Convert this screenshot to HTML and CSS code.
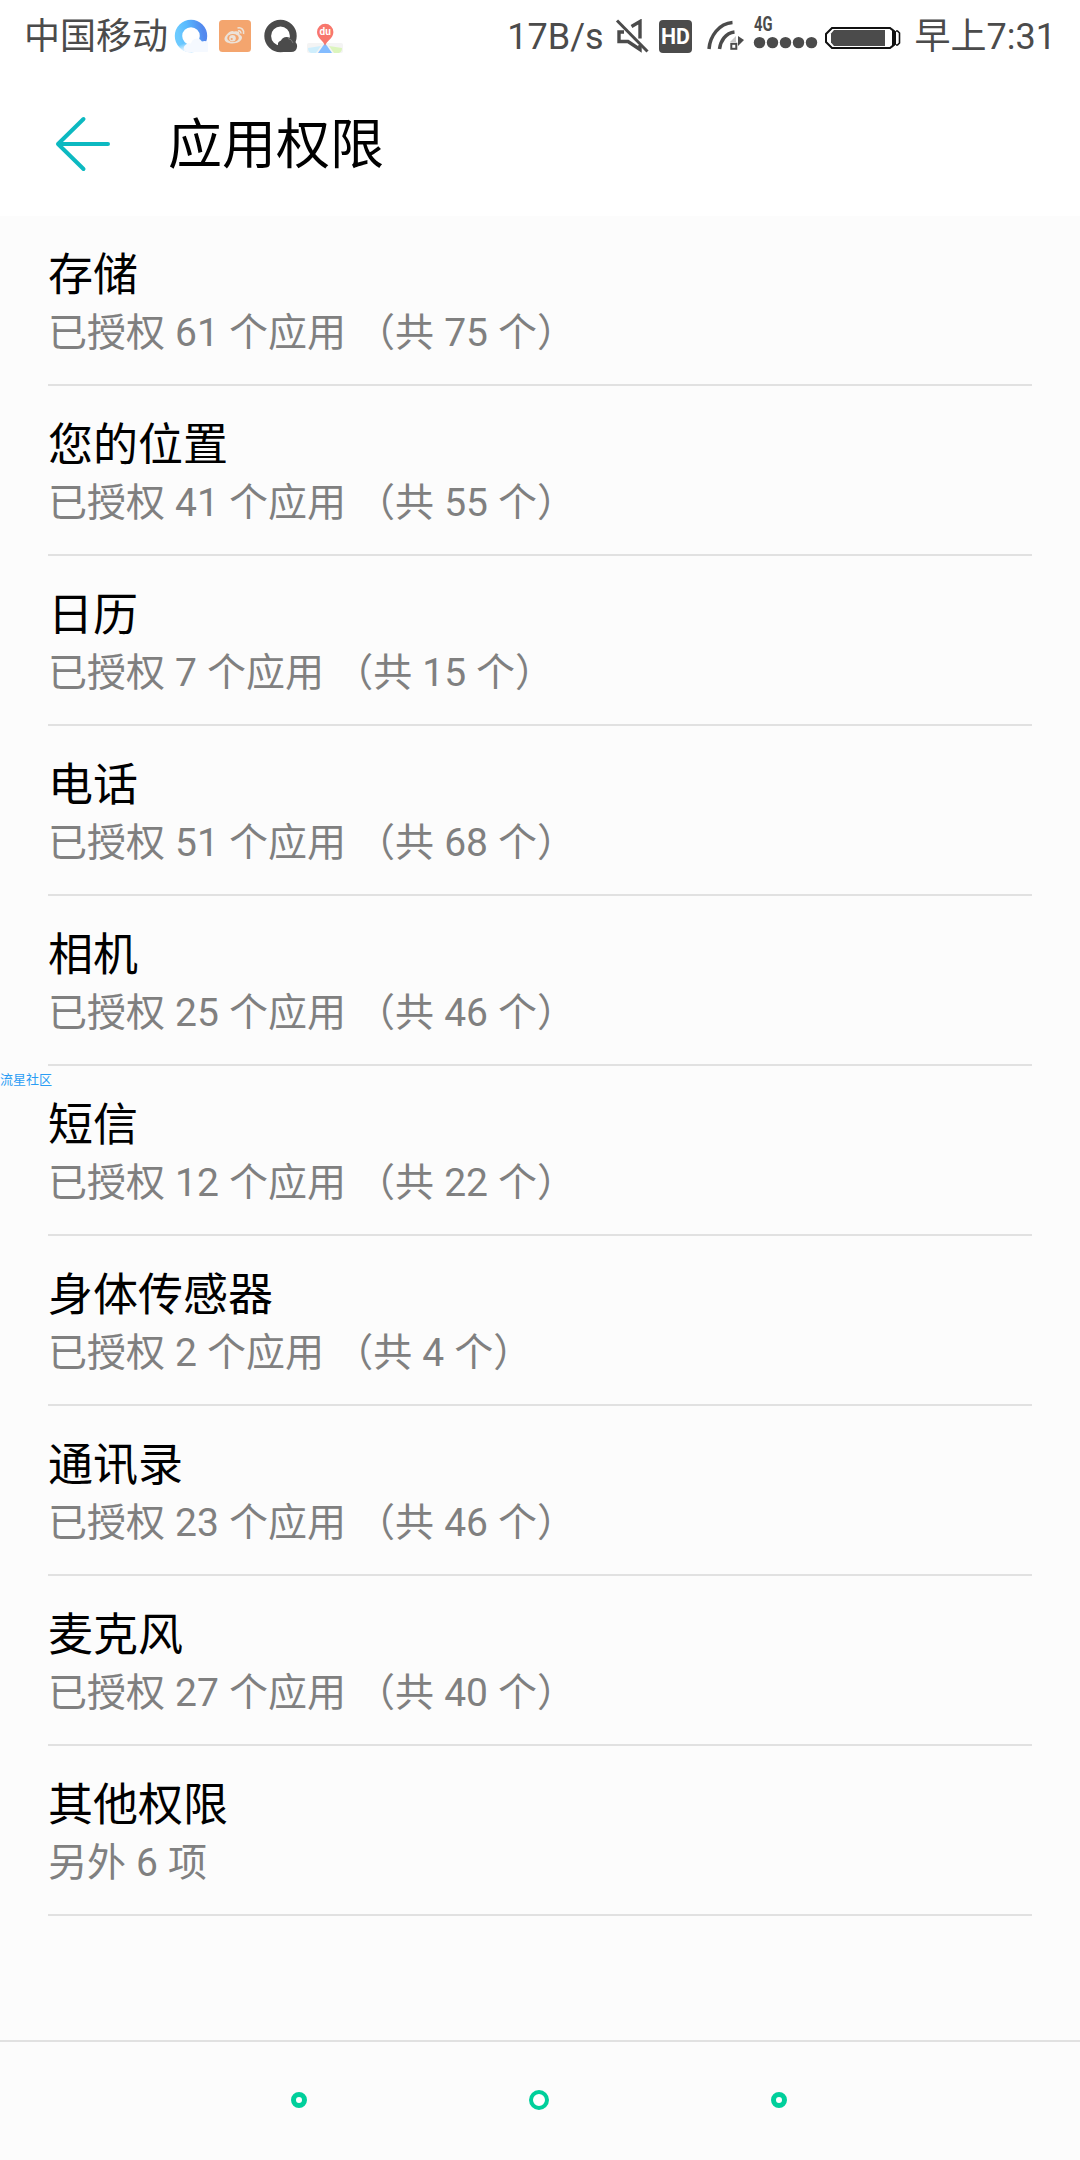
FILE: index.html
```html
<!DOCTYPE html>
<html lang="zh-CN">

<head>
  <meta charset="UTF-8" />
  <meta name="viewport" content="width=device-width, initial-scale=1.0" />
  <title>应用权限</title>
  <link rel="stylesheet" href="styles.css">
</head>

<body>
  <div class="status-bar">
    <div class="status-left">
      <span class="carrier">中国移动</span>
      <svg class="icon-browser" width="34" height="34" viewBox="0 0 34 34">
        <defs>
          <linearGradient id="ring" x1="0" y1="0.6" x2="1" y2="0.4">
            <stop offset="0" stop-color="#6ccaff" />
            <stop offset="0.4" stop-color="#58bbff" />
            <stop offset="1" stop-color="#5389ee" />
          </linearGradient>
          <linearGradient id="fade" x1="0.3" y1="0.4" x2="0.55" y2="1">
            <stop offset="0.2" stop-color="#fff" stop-opacity="0" />
            <stop offset="0.9" stop-color="#f4f9ff" />
          </linearGradient>
        </defs>
        <circle cx="17" cy="17" r="12.500" fill="none" stroke="url(#ring)" stroke-width="7.400" />
        <path d="M.5 17a16.500 16.500 0 0 0 16.500 16.500V26a9 9 0 0 1-9-9z" fill="url(#fade)" />
        <path d="M13 33a4 4 0 0 1-1-7.500a5 5 0 0 1 5-1a6 6 0 0 1 11-2a5 5 0 0 1 5 10.500z" fill="#f5f9ff" />
      </svg>
      <svg class="icon-weibo" width="32" height="32" viewBox="0 0 32 32">
        <rect width="32" height="32" rx="3.500" fill="#f4a56e" />
        <path d="M15 11.500c-3-2.500-9.500 4-9.500 7.500c0 3 4 4.500 8 4.500c5.500 0 9.500-3 9.500-6c0-2-2-2.500-2.500-3c.6-3-2-4-5.500-3z" fill="#ece2d8" />
        <ellipse cx="14" cy="18" rx="5.800" ry="4" fill="#f4a56e" />
        <circle cx="13.500" cy="18.300" r="3.300" fill="#ece2d8" />
        <circle cx="12.700" cy="19" r="1.100" fill="#f4a56e" />
        <path d="M18.500 8c4-1 7 2 6 6M19 11c2-.4 3.200.8 2.800 2.500" fill="none" stroke="#ece2d8" stroke-width="1.600" />
      </svg>
      <svg class="icon-quark" width="34" height="34" viewBox="0 0 34 34">
        <circle cx="16.500" cy="17" r="12.800" fill="none" stroke="#4b4b4b" stroke-width="6.800" />
        <path d="M14 33v-6.500a4.500 4.500 0 0 1 3-5a6 6 0 0 1 11 0a5.500 5.500 0 0 1 5 6.500q-.5 5-6 5z" fill="#4b4b4b" />
        <path d="M24 19.500a6 6 0 0 1 5 4.500" fill="none" stroke="#888" stroke-width=".7" />
      </svg>
      <svg class="icon-map" width="36" height="32" viewBox="0 0 36 32">
        <rect y="20" width="36" height="10" rx="2" fill="#f4f4f4" />
        <path d="M1 25l13-2-5 7H4q-3-1-3-5z" fill="#cfeefc" />
        <path d="M35 25l-13-2 5 7h5q3-1 3-5z" fill="#dcf5bd" />
        <path d="M18 20l7 10H11z" fill="#83bcff" />
        <path d="M18 23c-1-5-8-7.500-8-14a8.200 8.200 0 0 1 16.400 0c0 6.500-7 9-8.400 14z" fill="#f8776d" />
        <text x="18.200" y="11.700" class="map-text">du</text>
      </svg>
    </div>
    <div class="status-right">
      <span class="speed">17B/s</span>
      <svg class="icon-mute" width="34" height="34" viewBox="0 0 34 34" fill="none" stroke="#4b4b4b">
        <path d="M16.500 7.500L25 2.500v17M25 26v4.500L13 22.500H4V13h5" stroke-width="3.400" />
        <path d="M2 1.500l30.500 31" stroke-width="3" />
      </svg>
      <svg class="icon-hd" width="33" height="33" viewBox="0 0 33 33">
        <rect width="33" height="33" rx="4" fill="#4b4b4b" />
        <text x="16.500" y="24.200" class="hd-text" textLength="29" lengthAdjust="spacingAndGlyphs">HD</text>
      </svg>
      <svg class="icon-wifi" width="38" height="32" viewBox="0 0 38 32">
        <path d="M2 29C3 16 12 3.500 25.500 2.500M12.500 29C13.500 21 18.500 13 27.500 12" fill="none" stroke="#4b4b4b" stroke-width="3.500" />
        <path d="M23 22l6-6v6z" fill="#c8c8c8" />
        <path d="M31 16l6 4-6 6z" fill="#4b4b4b" />
        <rect x="24.300" y="23.800" width="5" height="5" fill="none" stroke="#4b4b4b" stroke-width="2" />
      </svg>
      <svg class="icon-signal" width="66" height="44" viewBox="0 0 66 44" fill="#4b4b4b">
        <text x="1" y="22.500" class="signal-text" textLength="18.500" lengthAdjust="spacingAndGlyphs">4G</text>
        <circle cx="6.500" cy="34.600" r="5.700" />
        <circle cx="19.500" cy="34.600" r="5.700" />
        <circle cx="32.500" cy="34.600" r="5.700" />
        <circle cx="45.500" cy="34.600" r="5.700" />
        <circle cx="58.500" cy="34.600" r="5.700" />
      </svg>
      <svg class="icon-battery" width="76" height="22" viewBox="0 0 76 22">
        <path d="M7 1H65L70 5V17L65 21H7L1 15V7z" fill="#fff" stroke="#111" stroke-width="2" />
        <path d="M67 1.500l4 3.500v12l-4 3.500z" fill="#111" />
        <path d="M71 4h1.500l2 2v10l-2 2H71" fill="#fff" stroke="#111" stroke-width="1.600" />
        <path d="M9 3H60V19H9L6 15.500V6.500z" fill="#4b4b4b" />
      </svg>
      <span class="time">早上7:31</span>
    </div>
  </div>

  <div class="header">
    <svg class="back" width="56" height="56" viewBox="0 0 56 56" fill="none" stroke="#0cb9c1" stroke-width="4" stroke-linecap="round" stroke-linejoin="round">
      <path d="M28.500 3L3 28l25.500 25M3 28h50" />
    </svg>
    <h1>应用权限</h1>
  </div>

  <ul class="list">
    <li>
      <div class="name">存储</div>
      <div class="info">已授权 61 个应用 （共 75 个）</div>
    </li>
    <li>
      <div class="name">您的位置</div>
      <div class="info">已授权 41 个应用 （共 55 个）</div>
    </li>
    <li>
      <div class="name">日历</div>
      <div class="info">已授权 7 个应用 （共 15 个）</div>
    </li>
    <li>
      <div class="name">电话</div>
      <div class="info">已授权 51 个应用 （共 68 个）</div>
    </li>
    <li>
      <div class="name">相机</div>
      <div class="info">已授权 25 个应用 （共 46 个）</div>
    </li>
    <li>
      <div class="name">短信</div>
      <div class="info">已授权 12 个应用 （共 22 个）</div>
    </li>
    <li>
      <div class="name">身体传感器</div>
      <div class="info">已授权 2 个应用 （共 4 个）</div>
    </li>
    <li>
      <div class="name">通讯录</div>
      <div class="info">已授权 23 个应用 （共 46 个）</div>
    </li>
    <li>
      <div class="name">麦克风</div>
      <div class="info">已授权 27 个应用 （共 40 个）</div>
    </li>
    <li>
      <div class="name">其他权限</div>
      <div class="info">另外 6 项</div>
    </li>
  </ul>

  <div class="nav-bar">
    <span class="dot"></span>
    <span class="dot home"></span>
    <span class="dot"></span>
  </div>

  <div class="watermark">流星社区</div>
</body>

</html>
```
FILE: styles.css
```css
* {
  box-sizing: border-box;
}

body {
  margin: 0;
  width: 1080px;
  height: 2160px;
  display: flex;
  flex-direction: column;
  position: relative;
  overflow: hidden;
  background: #fcfcfc;
  font-family: Roboto, "Noto Sans CJK SC", sans-serif;
}

svg {
  display: block;
  flex: none;
}

/* status bar */
.status-bar {
  height: 72px;
  display: flex;
  justify-content: space-between;
  padding: 0 24px;
  background: #fff;
  color: #4b4b4b;
  font-size: 36px;
  line-height: 72px;
  white-space: nowrap;
}

.status-left,
.status-right {
  display: flex;
  align-items: center;
}

.carrier,
.speed,
.time {
  padding-top: 3px;
  line-height: 69px;
}

.icon-browser {
  margin-left: 6px;
}

.icon-weibo {
  margin-left: 11px;
}

.icon-quark {
  margin-left: 13px;
}

.icon-map {
  margin: 6px 0 0 9px;
}

.map-text {
  font-size: 10px;
  font-weight: bold;
  fill: #fff;
  text-anchor: middle;
}

.icon-mute {
  margin-left: 11px;
}

.icon-hd {
  margin-left: 10px;
}

.hd-text {
  font-size: 22px;
  font-weight: bold;
  fill: #fff;
  text-anchor: middle;
}

.icon-wifi {
  margin-left: 15px;
}

.icon-signal {
  margin: -12px 0 0 8px;
}

.signal-text {
  font-size: 21px;
  font-weight: bold;
}

.icon-battery {
  margin: 4px 14px 0 6px;
}

/* header */
.header {
  height: 144px;
  display: flex;
  align-items: center;
  padding: 0 0 0 55px;
  background: #fff;
}

.header h1 {
  margin: 3px 0 0 57px;
  font-size: 54px;
  font-weight: normal;
  line-height: 80px;
  color: #000;
}

/* permission list */
.list {
  flex: 1;
  margin: 0;
  padding: 0 48px;
  list-style: none;
}

.list li {
  height: 170px;
  padding-top: 30px;
  border-bottom: 2px solid #e1e1e1;
}

.name {
  font-size: 45px;
  line-height: 60px;
  color: #000;
}

.info {
  font-size: 39px;
  line-height: 54px;
  word-spacing: 0.4px;
  color: #808080;
}

/* bottom navigation */
.nav-bar {
  height: 120px;
  display: flex;
  justify-content: center;
  align-items: center;
  gap: 222px;
  padding: 0 2px 2px 0;
  border-top: 2px solid #e1e1e1;
}

.dot {
  width: 16px;
  height: 16px;
  border: 5px solid #00cf9b;
  border-radius: 50%;
  background: #fff;
}

.dot.home {
  width: 20px;
  height: 20px;
  border-width: 4px;
}

.watermark {
  position: absolute;
  left: 0;
  top: 1070px;
  font-size: 13px;
  line-height: 20px;
  color: #2b9df4;
}
```
